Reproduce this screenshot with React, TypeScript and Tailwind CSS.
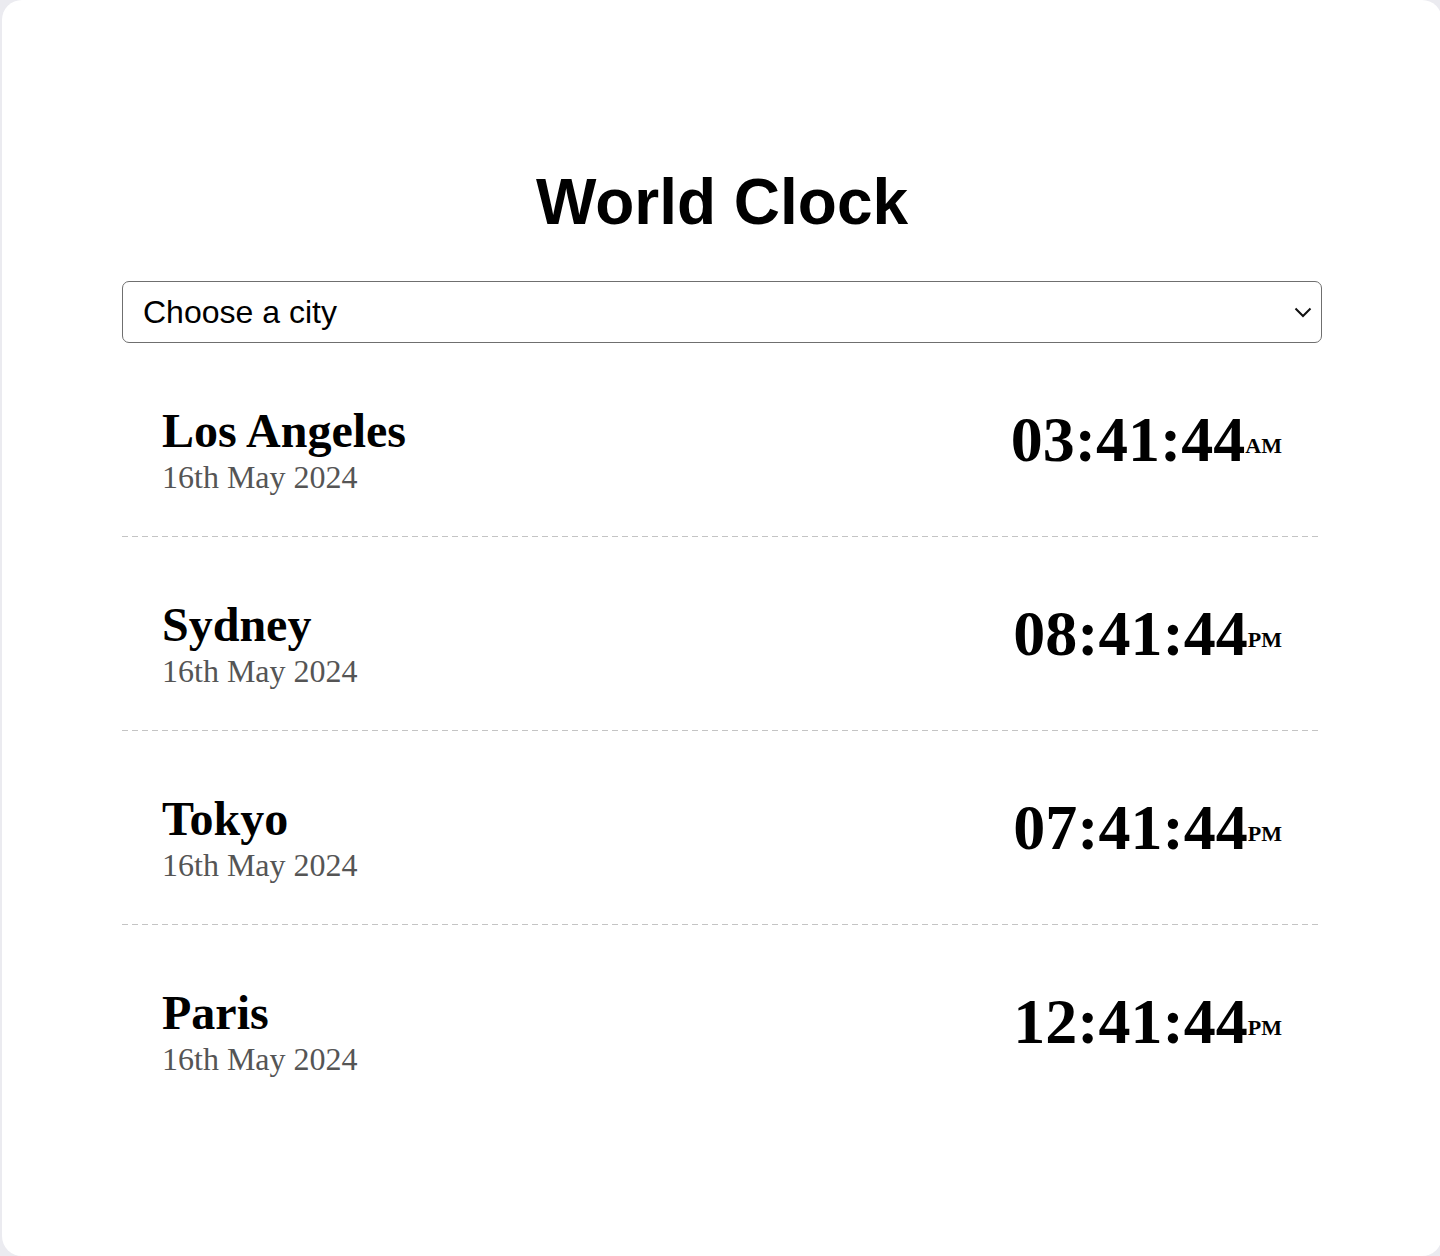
import React from "react";

const cities = [
  { name: "Los Angeles", date: "16th May 2024", time: "03:41:44", ampm: "AM" },
  { name: "Sydney", date: "16th May 2024", time: "08:41:44", ampm: "PM" },
  { name: "Tokyo", date: "16th May 2024", time: "07:41:44", ampm: "PM" },
  { name: "Paris", date: "16th May 2024", time: "12:41:44", ampm: "PM" },
];

export default function App() {
  return (
    <div className="w-[1440px] h-[1256px] bg-[#ebebf0] overflow-hidden">
      <div className="ml-[2px] w-[1440px] h-[1256px] rounded-[20px] bg-white px-[120px] pt-[165px]">
        <h1
          className="text-center text-[64px] font-bold leading-[74px] text-black"
          style={{ fontFamily: '"Liberation Sans", Arial, sans-serif' }}
        >
          World Clock
        </h1>
        <div className="relative mt-[42px]">
          <select
            className="w-full h-[62px] appearance-none rounded-[7px] border border-[#6f6f6f] bg-white pl-[20px] pr-[40px] text-[32px] text-black outline-none"
            style={{ fontFamily: '"Liberation Sans", Arial, sans-serif' }}
            defaultValue=""
          >
            <option value="">Choose a city</option>
            <option>Los Angeles</option>
            <option>Sydney</option>
            <option>Tokyo</option>
            <option>Paris</option>
          </select>
          <svg
            className="pointer-events-none absolute right-[10px] top-[26px]"
            width="18"
            height="11"
            viewBox="0 0 18 11"
            fill="none"
          >
            <path d="M1.5 1.5 L9 9 L16.5 1.5" stroke="#111" strokeWidth="2" />
          </svg>
        </div>
        <div style={{ fontFamily: '"Liberation Serif", "Times New Roman", serif' }}>
          {cities.map((c, i) => (
            <div key={c.name}>
              <div className="flex items-start justify-between px-[40px] pt-[61px] h-[193px]">
                <div className="flex flex-col">
                  <div className="text-[48px] font-bold leading-[53px] text-black">{c.name}</div>
                  <div className="text-[32px] leading-[41px] text-[#555555]">{c.date}</div>
                </div>
                <div className="text-[64px] font-bold leading-[71px] text-black whitespace-nowrap">
                  {c.time}
                  <span className="text-[22px] align-[8px]">{c.ampm}</span>
                </div>
              </div>
              {i < cities.length - 1 && (
                <div className="h-px bg-[linear-gradient(to_right,#c4c4c4_6px,transparent_6px)] bg-[length:10px_1px]" />
              )}
            </div>
          ))}
        </div>
      </div>
    </div>
  );
}
